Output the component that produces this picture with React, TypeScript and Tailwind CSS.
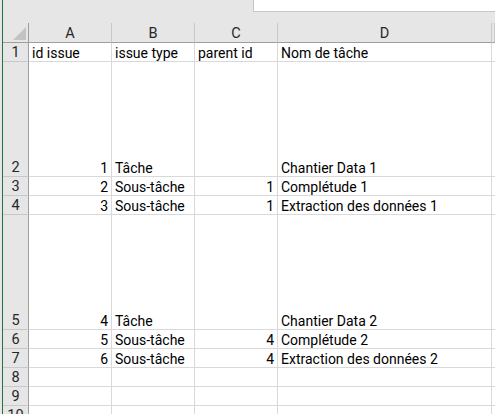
const cols = ['A', 'B', 'C', 'D', ''];

type Row = { n: number; h: string; a?: string; b?: string; c?: string; d?: string };

const rows: Row[] = [
  { n: 1, h: 'h-[19px]', a: 'id issue', b: 'issue type', c: 'parent id', d: 'Nom de tâche' },
  { n: 2, h: 'h-[115px]', a: '1', b: 'Tâche', d: 'Chantier Data 1' },
  { n: 3, h: 'h-[19px]', a: '2', b: 'Sous-tâche', c: '1', d: 'Complétude 1' },
  { n: 4, h: 'h-[19px]', a: '3', b: 'Sous-tâche', c: '1', d: 'Extraction des données 1' },
  { n: 5, h: 'h-[115px]', a: '4', b: 'Tâche', d: 'Chantier Data 2' },
  { n: 6, h: 'h-[19px]', a: '5', b: 'Sous-tâche', c: '4', d: 'Complétude 2' },
  { n: 7, h: 'h-[19px]', a: '6', b: 'Sous-tâche', c: '4', d: 'Extraction des données 2' },
  { n: 8, h: 'h-[19px]' },
  { n: 9, h: 'h-[19px]' },
  { n: 10, h: 'h-[19px]' },
];

const isNum = (v?: string) => !!v && /^\d+$/.test(v);

function Cell({ value, width }: { value?: string; width: string }) {
  return (
    <div
      className={`${width} shrink-0 h-full bg-white border-r border-b border-[#d9d9d9] flex items-end px-[3px] overflow-visible whitespace-nowrap ${
        isNum(value) ? 'justify-end' : 'justify-start'
      }`}
    >
      <span className="leading-[16px]">{value}</span>
    </div>
  );
}

export default function App() {
  return (
    <div className="w-[495px] h-[414px] overflow-hidden bg-[#e6e6e6] flex font-['Roboto',sans-serif] text-[14px] text-black">
      <div className="w-[2px] shrink-0 bg-[#e6e6e6]" />
      <div className="w-[1px] shrink-0 bg-[#217346]" />

      <div className="flex-1 flex flex-col min-w-0">
        {/* formula bar strip */}
        <div className="h-[23px] shrink-0 flex">
          <div className="w-[250px] shrink-0" />
          <div className="flex-1 h-[12px] bg-white border-l border-b border-[#c6c6c6]" />
        </div>

        {/* column headers */}
        <div className="h-[20px] shrink-0 flex">
          <div className="w-[26px] shrink-0 h-full border-r border-b border-[#9e9e9e] relative">
            <svg className="absolute right-[2px] bottom-[2px]" width="13" height="13" viewBox="0 0 13 13">
              <polygon points="13,0 13,13 0,13" fill="#c3c3c3" />
            </svg>
          </div>
          {cols.map((c, i) => (
            <div
              key={i}
              className={`${
                ['w-[83px]', 'w-[83px]', 'w-[83px]', 'w-[214px]', 'flex-1'][i]
              } shrink-0 h-full border-r border-b border-r-[#c8c8c8] border-b-[#9e9e9e] flex items-end justify-center text-[#262626] text-[14.5px]`}
            >
              <span className="leading-[17px]">{c}</span>
            </div>
          ))}
        </div>

        {/* rows */}
        {rows.map((r) => (
          <div key={r.n} className={`${r.h} shrink-0 flex`}>
            <div className="w-[26px] shrink-0 h-full border-r border-b border-r-[#9e9e9e] border-b-[#c8c8c8] flex items-end justify-center text-[#262626] text-[14.5px]">
              <span className="leading-[16px]">{r.n}</span>
            </div>
            <Cell width="w-[83px]" value={r.a} />
            <Cell width="w-[83px]" value={r.b} />
            <Cell width="w-[83px]" value={r.c} />
            <Cell width="w-[214px]" value={r.d} />
            <Cell width="flex-1" />
          </div>
        ))}
      </div>
    </div>
  );
}
